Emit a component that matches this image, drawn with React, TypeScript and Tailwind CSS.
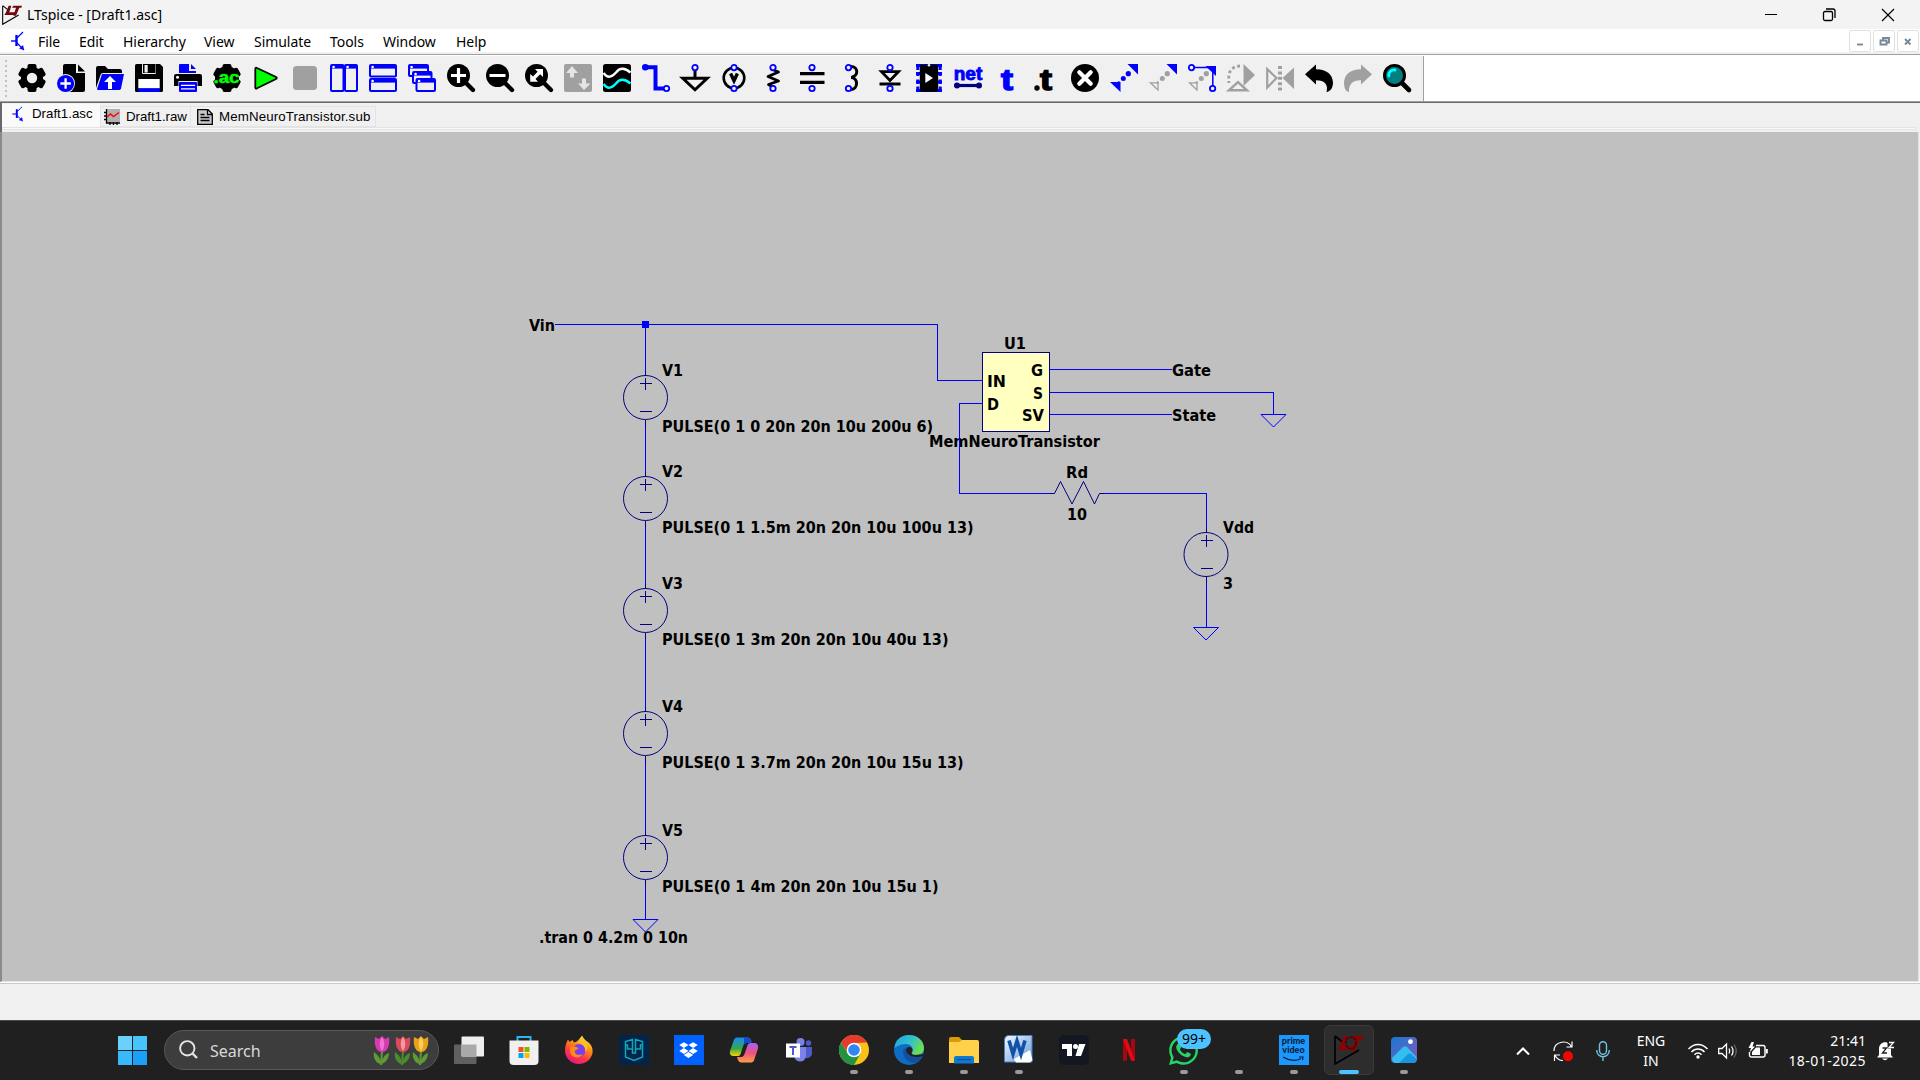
import React from "react";
import type { ReactNode } from "react";
import { FaDropbox, FaWhatsapp } from "react-icons/fa";

const BLUE = "#0000ff";
const NAVY = "#000080";
const GREY = "#a0a0a0";
const BAR = "#f0f0f0";

/* ---------- toolbar ---------- */

function Pin({ x, y }: { x: number; y: number }) {
  return <circle cx={x} cy={y} r="2.7" fill={BAR} stroke={BLUE} strokeWidth="1.8" />;
}

function Lens() {
  return (
    <>
      <circle cx="11.5" cy="11.5" r="11.5" fill="#000" />
      <path d="M18 18 L26 26" stroke="#000" strokeWidth="4.4" strokeLinecap="round" />
    </>
  );
}

function Win({ x, y, w, h, bg = BAR }: { x: number; y: number; w: number; h: number; bg?: string }) {
  return (
    <>
      <rect x={x + 1} y={y + 1} width={w - 2} height={h - 2} rx="1" fill={bg} stroke={BLUE} strokeWidth="2" />
      <rect x={x + 1} y={y + 1} width={w - 2} height="3.6" fill={BLUE} />
      <circle cx={x + 3.6} cy={y + 3} r="1.3" fill="#fff" />
    </>
  );
}

function Dots({ color }: { color: string }) {
  return (
    <g fill={color}>
      <circle cx="13.3" cy="14.5" r="2.5" />
      <circle cx="18.3" cy="9.7" r="2.6" />
      <circle cx="8.8" cy="18.5" r="1.2" />
    </g>
  );
}

const toolIcons: ReactNode[] = [
  <g>
    <rect x="9.5" y="0" width="9" height="28" rx="2" />
    <rect x="9.5" y="0" width="9" height="28" rx="2" transform="rotate(60 14 14)" />
    <rect x="9.5" y="0" width="9" height="28" rx="2" transform="rotate(120 14 14)" />
    <circle cx="14" cy="14" r="11" />
    <circle cx="14" cy="14" r="5.2" fill={BAR} />
  </g>,
  <g>
    <path d="M8 0 H19 V9 H28 V26 Q28 28 26 28 H6 V2 Q6 0 8 0 Z" />
    <path d="M21 0.5 L28 7.5 H21 Z" />
    <circle cx="8.6" cy="19.5" r="9.4" fill={BAR} />
    <circle cx="8.6" cy="19.5" r="8.6" fill={BLUE} />
    <path d="M8.6 14.3 V24.7 M3.4 19.5 H13.8" stroke="#fff" strokeWidth="2.3" />
  </g>,
  <g>
    <path d="M0 24 V4 Q0 2 2 2 H9 L12 5 H24 Q26 5 26 7 V9 H7 Q5 9 4.5 11 Z" />
    <path d="M6 10 H28 L25 24.5 Q24.5 26 23 26 H2 Q0.8 26 1.2 24.5 Z" fill={BLUE} />
    <path d="M14 12 L20 18 H16 V25 H12 V18 H8 Z" fill="#fff" />
  </g>,
  <g>
    <path d="M1.5 0 H25 L28 3 V26.5 Q28 28 26.5 28 H1.5 Q0 28 0 26.5 V1.5 Q0 0 1.5 0 Z" />
    <rect x="7" y="0" width="14" height="10" rx="1" fill={BAR} />
    <rect x="8" y="0" width="12.5" height="9" />
    <rect x="9.5" y="1" width="3.2" height="7.5" fill={BAR} />
    <rect x="3.3" y="15" width="21.4" height="9.5" fill="#fff" />
    <rect x="3.3" y="24.3" width="21.4" height="3.7" fill={BLUE} />
  </g>,
  <g>
    <path d="M5 9 V1 Q5 0 6 0 H15 V7 H22 V9 Z M17 0 L22 5 H17 Z" fill={BLUE} />
    <path d="M2 10 H26 Q28 10 28 12 V22 H23.5 V17 H4.5 V22 H0 V12 Q0 10 2 10 Z" />
    <circle cx="3.5" cy="13.3" r="1.5" fill="#fff" />
    <rect x="5" y="18" width="18" height="10" rx="1" fill={BLUE} />
    <path d="M7 21.3 H21 M7 24.8 H21" stroke="#fff" strokeWidth="1.3" />
  </g>,
  <g>
    <rect x="9.5" y="0" width="9" height="28" rx="2" />
    <rect x="9.5" y="0" width="9" height="28" rx="2" transform="rotate(60 14 14)" />
    <rect x="9.5" y="0" width="9" height="28" rx="2" transform="rotate(120 14 14)" />
    <circle cx="14" cy="14" r="12" />
    <text x="0.5" y="19" textLength="26" lengthAdjust="spacingAndGlyphs" fill="#00ff00" stroke="#00ff00" strokeWidth="0.5" fontFamily="Liberation Sans" fontWeight="700" fontSize="16">.ac</text>
  </g>,
  <path d="M3.3 5 Q3.3 3 5 4 L24 13 Q25.5 14 24 15 L5 24.3 Q3.3 25 3.3 23.3 Z" fill="#00ff00" stroke="#000" strokeWidth="1.8" />,
  <rect x="2" y="2" width="24" height="24" rx="3.5" fill={GREY} />,
  <g>
    <Win x={0} y={0} w={14.5} h={28} />
    <Win x={14} y={0} w={14} h={28} />
  </g>,
  <g>
    <Win x={0} y={0} w={28} h={13.5} />
    <Win x={0} y={14} w={28} h={14} />
  </g>,
  <g>
    <Win x={0} y={0} w={21} h={13} />
    <Win x={4} y={7} w={20.5} h={13} />
    <Win x={7.5} y={14} w={20.5} h={14} />
  </g>,
  <g>
    <Lens />
    <path d="M11.5 4 V19 M4 11.5 H19" stroke="#fff" strokeWidth="3.2" />
  </g>,
  <g>
    <Lens />
    <path d="M3.5 11.5 H19.5" stroke="#fff" strokeWidth="3" />
  </g>,
  <g>
    <Lens />
    <path d="M10 5 H18 V13 L15.2 10.2 L10.5 15 L13 17.8 H5.2 V10 L8 12.6 L12.6 7.8 Z" fill="#fff" />
  </g>,
  <g>
    <rect width="28" height="28" rx="2" fill={GREY} />
    <path d="M8 2 L14 9 H10 V13.5 H6 V9 H2 Z M20 26 L26.5 19.5 H22 V14.5 H18 V19.5 H14 Z" fill="#e4e4e4" />
  </g>,
  <g>
    <rect width="28" height="28" rx="2.5" />
    <path d="M0.5 9 C5 15 9 13 13 8.5 C17 3 22 4 27.5 8.5" fill="none" stroke="#fff" strokeWidth="2.4" />
    <path d="M0.5 20 C5 26 9 24 13 19.5 C17 14 22 15 27.5 19.5" fill="none" stroke="#00ffff" strokeWidth="2.4" />
  </g>,
  <g>
    <path d="M3 3.2 H13.5 V24.5 H22" fill="none" stroke={BLUE} strokeWidth="4" />
    <circle cx="3.3" cy="3.2" r="3.3" fill={BLUE} />
    <Pin x={24.5} y={24.5} />
  </g>,
  <g>
    <path d="M14 6 V14 M1.8 14.3 H26.2 L14 25.8 Z" fill="none" stroke="#000" strokeWidth="3" />
    <Pin x={14} y={3.6} />
  </g>,
  <g>
    <circle cx="14" cy="14" r="10.3" fill="none" stroke="#000" strokeWidth="2.6" />
    <path d="M10.6 9.6 L14 16.8 L17.4 9.6" fill="none" stroke="#000" strokeWidth="3.4" />
    <Pin x={14} y={3.6} />
    <Pin x={14} y={24.5} />
  </g>,
  <g>
    <path d="M15 6.2 L19.5 8 L9 12.5 L19.5 17 L9.5 20.5 L13 22.5" fill="none" stroke="#000" strokeWidth="2.8" strokeLinejoin="round" />
    <Pin x={14} y={3.6} />
    <Pin x={14} y={24.5} />
  </g>,
  <g>
    <path d="M2 9.6 H26.5 M2 18.3 H26.5" stroke="#000" strokeWidth="3.2" />
    <Pin x={14} y={3.6} />
    <Pin x={14} y={24.5} />
  </g>,
  <g>
    <path d="M14 2.500 C21.500 2.500 21.500 12 15 13 M14 13.500 C21.500 13.500 21.500 25.500 13.500 25.500" fill="none" stroke="#000" strokeWidth="3" />
    <Pin x={11.5} y={3.6} />
    <Pin x={11.5} y={24.5} />
  </g>,
  <g>
    <path d="M5.5 7.6 H22.5 L14 16.5 Z M3.5 20 H24.5" fill="none" stroke="#000" strokeWidth="2.8" />
    <Pin x={14} y={3.6} />
    <Pin x={14} y={24.5} />
  </g>,
  <g>
    <path d="M1 1.5 H27 M1 9.5 H27 M1 18 H27 M1 26.5 H27 M2.8 0 V6 M2.8 8 V12 M2.8 15.5 V20 M2.8 22.5 V28 M25.2 0 V6 M25.2 8 V12 M25.2 15.5 V20 M25.2 22.5 V28" stroke={BLUE} strokeWidth="3" />
    <rect x="4.8" y="0.7" width="18.4" height="27" rx="2" />
    <path d="M10.3 9 L18 14 L10.3 19 Z" fill="#fff" />
    <circle cx="14" cy="1.2" r="1.3" fill={BAR} />
  </g>,
  <g>
    <text x="-0.3" y="16" textLength="28.5" lengthAdjust="spacingAndGlyphs" fill={BLUE} stroke={BLUE} strokeWidth="0.9" fontFamily="Liberation Sans" fontWeight="700" fontSize="19">net</text>
    <path d="M3 21.5 H25" stroke={NAVY} strokeWidth="3.2" />
    <circle cx="3" cy="21.5" r="3" fill={NAVY} />
    <circle cx="25" cy="21.5" r="3" fill={NAVY} />
  </g>,
  <text x="8" y="25.5" textLength="12" lengthAdjust="spacingAndGlyphs" fill={BLUE} stroke={BLUE} strokeWidth="1.4" fontFamily="Liberation Sans" fontWeight="700" fontSize="30">t</text>,
  <g stroke="#000" strokeWidth="1.4">
    <text x="8" y="25.5" textLength="12" lengthAdjust="spacingAndGlyphs" fontFamily="Liberation Sans" fontWeight="700" fontSize="30">t</text>
    <circle cx="5" cy="24" r="2" />
  </g>,
  <g>
    <circle cx="14" cy="14" r="14" />
    <path d="M8.3 8.3 L19.7 19.7 M19.7 8.3 L8.3 19.7" stroke="#fff" strokeWidth="4.2" strokeLinecap="round" />
  </g>,
  <g fill={BLUE}>
    <path d="M17.5 0 H28 V10.5 Z M0 18 H10.5 V28 Z" />
    <Dots color={BLUE} />
  </g>,
  <g>
    <path d="M17.5 0 H28 V10.5 Z" fill={BLUE} />
    <path d="M1.5 18.8 H9 V26 Z" fill="none" stroke={GREY} strokeWidth="1.3" />
    <Dots color={GREY} />
  </g>,
  <g>
    <path d="M17.5 2 H28 V12 Z" fill={BLUE} />
    <path d="M1.5 18.8 H9 V26 Z" fill="none" stroke={GREY} strokeWidth="1.3" />
    <Dots color={GREY} />
    <path d="M4 3.5 H27 M24.8 5 V22" stroke={BLUE} strokeWidth="1.5" />
    <Pin x={3.5} y={3.6} />
    <Pin x={24.6} y={24.5} />
  </g>,
  <g fill={GREY}>
    <path d="M16.5 0 L28 11 L16.5 22 Z" />
    <path d="M1.8 26.3 L11 18 L20 26.3 Z" fill="none" stroke={GREY} strokeWidth="2.4" />
    <path d="M13 2 C6 2 1.8 7 1.8 13 V19" fill="none" stroke={GREY} strokeWidth="2.8" strokeDasharray="2.8 2.6" />
  </g>,
  <g fill={GREY}>
    <path d="M28 3.5 V25 L16.5 14 Z" />
    <path d="M1.2 5 V23.5 L10.5 14 Z" fill="none" stroke={GREY} strokeWidth="2.2" />
    <path d="M14 2 V27" stroke={GREY} strokeWidth="4" strokeDasharray="3 2.4" />
  </g>,
  <path d="M0 10.3 L11 0.5 V5.3 C22 5.5 27.8 10.5 28 19 C27.8 24 25.5 27.5 21.5 28 C23.5 21 20 16.3 11 16.3 V20.5 Z" />,
  <path d="M28 10.3 L17 0.5 V5.3 C6 5.5 0.2 10.5 0 19 C0.2 24 1.5 27.5 5 28 C4.5 21 8 16.3 17 16.3 V20.5 Z" fill={GREY} />,
  <g>
    <path d="M19 19 L26 26" stroke="#000" strokeWidth="4.6" strokeLinecap="round" />
    <circle cx="11.5" cy="11.5" r="10" fill="#008080" stroke="#000" strokeWidth="3" />
    <path d="M5.8 12 C5.5 8 8.5 5.5 12 6" fill="none" stroke="#00ffff" strokeWidth="2.8" strokeLinecap="round" />
  </g>,
];

function Logo({ dark, className }: { dark?: boolean; className: string }) {
  return (
    <svg viewBox="0 0 30 30" className={className}>
      <path d="M1 1 V29 L25 15 M1 1 L10 8" fill="none" stroke="#000" strokeWidth="1.6" />
      <path d="M10 1 H14 L11 11 H19 L18 15 H3.500 L6 11 Z M17 1 H30 L29 4 H26 L21 16 H17 L21 4 H15 Z" fill={dark ? "#8b0000" : "#700810"} />
      {dark && <ellipse cx="17" cy="8" rx="5" ry="6" fill="none" stroke="#111" strokeWidth="1.2" strokeDasharray="3 1" />}
    </svg>
  );
}

function Transistor({ className }: { className: string }) {
  return (
    <svg viewBox="0 0 14 20" className={className} fill="none" stroke={BLUE}>
      <path d="M0 10 H5" strokeWidth="1.4" />
      <path d="M5.500 4 V15" strokeWidth="2.4" />
      <path d="M6 7 L12 1 M6 12 L13 19" strokeWidth="1.2" />
      <path d="M8.500 17.500 L12.500 18.500 L12 14.500 Z" fill={BLUE} strokeWidth="0.5" />
    </svg>
  );
}

const menus: [string, string][] = [
  ["File", "w-[41px]"],
  ["Edit", "w-[44px]"],
  ["Hierarchy", "w-[81px]"],
  ["View", "w-[50px]"],
  ["Simulate", "w-[76px]"],
  ["Tools", "w-[53px]"],
  ["Window", "w-[73px]"],
  ["Help", "w-[60px]"],
];

/* ---------- schematic ---------- */

function Label({ x, y, w, children }: { x: number; y: number; w: number; children: string }) {
  return (
    <text x={x} y={y} textLength={w} lengthAdjust="spacingAndGlyphs">
      {children}
    </text>
  );
}

function Source({ x, y }: { x: number; y: number }) {
  return (
    <g stroke={NAVY} fill="none">
      <circle cx={x} cy={y} r="22" />
      <path d={`M${x - 5.5} ${y - 14} h12 M${x} ${y - 20} v12 M${x - 5.5} ${y + 14} h12 M${x} ${y - 27} v5 M${x} ${y + 22} v6`} shapeRendering="crispEdges" />
    </g>
  );
}

function Ground({ x, y }: { x: number; y: number }) {
  return <path d={`M${x - 12.5} ${y} h25 l-12.500 12.500 Z`} fill="none" stroke={BLUE} />;
}

const sources = [
  { n: "V1", y: 397.5, t: "PULSE(0 1 0 20n 20n 10u 200u 6)", w: 271 },
  { n: "V2", y: 498.5, t: "PULSE(0 1 1.5m 20n 20n 10u 100u 13)", w: 311.5 },
  { n: "V3", y: 610.5, t: "PULSE(0 1 3m 20n 20n 10u 40u 13)", w: 286.5 },
  { n: "V4", y: 733.5, t: "PULSE(0 1 3.7m 20n 20n 10u 15u 13)", w: 301.5 },
  { n: "V5", y: 857.5, t: "PULSE(0 1 4m 20n 20n 10u 15u 1)", w: 276.5 },
];

function Schematic() {
  return (
    <svg viewBox="2 132 1916 849" className="block h-[849px] w-[1916px]">
      <rect x="982.5" y="352.5" width="67" height="79" fill="#ffffc0" stroke={NAVY} />
      <g fontFamily="'DejaVu Sans Condensed', 'DejaVu Sans', sans-serif" fontStretch="condensed" fontWeight="700" fontSize="16" fill="#000">
        <Label x={529} y={331} w={26}>Vin</Label>
        {sources.map((s) => (
          <g key={s.n}>
            <Label x={662} y={s.y - 21.5} w={21}>{s.n}</Label>
            <Label x={662} y={s.y + 34.5} w={s.w}>{s.t}</Label>
          </g>
        ))}
        <Label x={539} y={943} w={149}>.tran 0 4.2m 0 10n</Label>
        <Label x={1004} y={349} w={22}>U1</Label>
        <Label x={987} y={387} w={19}>IN</Label>
        <Label x={987} y={410} w={12}>D</Label>
        <Label x={1031} y={376} w={12}>G</Label>
        <Label x={1033} y={399} w={10}>S</Label>
        <Label x={1022} y={421} w={22}>SV</Label>
        <Label x={1172} y={376} w={39}>Gate</Label>
        <Label x={1172} y={421} w={44}>State</Label>
        <Label x={929} y={447} w={171}>MemNeuroTransistor</Label>
        <Label x={1066} y={478} w={22}>Rd</Label>
        <Label x={1067} y={520} w={20}>10</Label>
        <Label x={1223} y={533} w={31}>Vdd</Label>
        <Label x={1223} y={589} w={10}>3</Label>
      </g>
      <g fill="none" stroke={BLUE} shapeRendering="crispEdges">
        <path d="M555 324.500 H937.500 V380.500 H982 M1050 369.500 H1172 M1050 392.500 H1273.500 V414.500 M1050 414.500 H1172 M982 403.500 H959.500 V493.500 H1051 M1104 493.500 H1206.500 V528 M1206.500 582 V627.500" />
        <path d="M645.500 324.500 V371 M645.500 425 V472 M645.500 526 V584 M645.500 638 V707 M645.500 761 V831 M645.500 885 V919.500" />
      </g>
      <rect x="642" y="321" width="7" height="7" fill={BLUE} />
      {sources.map((s) => (
        <Source key={s.n} x={645.5} y={s.y} />
      ))}
      <Source x={1206} y={554.5} />
      <path d="M1050 493.500 H1054.500 L1060.500 481.500 L1072 504 L1083.500 481.500 L1094.500 504 L1099.500 493.500 H1105" fill="none" stroke={NAVY} />
      <Ground x={645.5} y={919.5} />
      <Ground x={1273.5} y={414.5} />
      <Ground x={1206} y={627.5} />
    </svg>
  );
}

/* ---------- taskbar ---------- */

function Tulip({ x, c, l, leaf }: { x: number; c: string; l: string; leaf: string }) {
  return (
    <g transform={`translate(${x} 0)`}>
      <path d="M10 16 L9 30" stroke={leaf} strokeWidth="2" />
      <path d="M9 29 C3 28 1 22 2 17 C6 20 9 24 9 29 Z M9 29 C14 28 17 23 17 18 C12 20 10 24 9 29 Z" fill={leaf} />
      <path d="M3 2 L7 4 L10 1 L13 4 L17 2 C18 10 16 17 10 17 C4 17 2 10 3 2 Z" fill={c} />
      <path d="M10 2 C13 6 13 12 10 16 C7 12 7 6 10 2 Z" fill={l} />
    </g>
  );
}

interface App {
  icon: ReactNode;
  running?: boolean;
  active?: boolean;
}

const apps: App[] = [
  {
    icon: (
      <svg viewBox="0 0 30 30" className="size-[30px]">
        <rect x="0" y="9.500" width="22.500" height="19.500" rx="1" fill="#606060" />
        <rect x="7.500" y="1.500" width="22.500" height="20" rx="1" fill="#eeeeee" />
        <rect x="7.500" y="9.500" width="15" height="12" fill="#a9a9a9" />
      </svg>
    ),
  },
  {
    icon: (
      <svg viewBox="0 0 30 30" className="size-[30px]">
        <path d="M8.500 7 V2 H21.500 V7" fill="none" stroke="#29b6f6" strokeWidth="2" />
        <path d="M.5 5.500 H29.500 V26 Q29.500 30 25.500 30 H4.500 Q.5 30 .5 26 Z" fill="#f0f0f0" />
        <rect x="9.500" y="12" width="5" height="5" fill="#f25022" />
        <rect x="15.500" y="12" width="5" height="5" fill="#7fba00" />
        <rect x="9.500" y="18" width="5" height="5" fill="#00a4ef" />
        <rect x="15.500" y="18" width="5" height="5" fill="#ffb900" />
      </svg>
    ),
  },
  {
    icon: (
      <svg viewBox="0 0 30 30" className="size-[30px]">
        <defs>
          <linearGradient id="fx" x1="0.8" y1="0" x2="0.3" y2="1">
            <stop offset="0" stopColor="#fff44f" />
            <stop offset="0.35" stopColor="#ff980e" />
            <stop offset="0.7" stopColor="#ff3647" />
            <stop offset="1" stopColor="#e31587" />
          </linearGradient>
        </defs>
        <path d="M18 0.500 C20 4 21 5 24 7 C28 10 29 14 28.500 18 C27 25 21 29 15 29 C7 29 1 23 1 15.500 C1 11 2.500 7 4 4.500 L5.500 7 L8.500 5 L10 7.500 C13 7 15.500 4 18 0.500 Z" fill="url(#fx)" />
        <circle cx="15" cy="15.500" r="6.500" fill="#7b3ff0" />
        <path d="M6 12 C10 10 12 12 15 13 L10.500 16 C11 20 15 21 19 19 C16 24 7 24 6 16 Z" fill="#ff8a16" />
        <path d="M13 8 C19 8 22 12 21 17 C25 13 24 8 18 5 Z" fill="#ffbd2e" />
      </svg>
    ),
  },
  {
    icon: (
      <svg viewBox="0 0 30 30" className="size-[30px]" fill="none" stroke="#12a5b8" strokeWidth="1.500">
        <rect width="30" height="30" fill="#00244a" stroke="none" />
        <path d="M6.500 15 V6.500 L13.500 4.500 V14 H8.500 V10 H6.500 M23.500 15 V6.500 L16.500 4.500 V14 H21.500 V10 H23.500 M6.500 15 V22 L15 25.500 L23.500 22 V15 M13.500 14 V18 H16.500 V14" />
      </svg>
    ),
  },
  {
    icon: (
      <div className="flex size-[30px] items-center justify-center bg-[#0061ff]">
        <FaDropbox className="h-[18px] w-[19px] text-white" />
      </div>
    ),
  },
  {
    icon: (
      <svg viewBox="0 0 30 30" className="size-[30px]">
        <defs>
          <linearGradient id="cp1" x1="0" y1="0" x2="0" y2="1">
            <stop offset="0" stopColor="#178cf0" />
            <stop offset="0.6" stopColor="#35a84c" />
            <stop offset="1" stopColor="#ffd400" />
          </linearGradient>
          <linearGradient id="cp2" x1="0" y1="0" x2="0" y2="1">
            <stop offset="0" stopColor="#a763f5" />
            <stop offset="0.5" stopColor="#ee4f82" />
            <stop offset="1" stopColor="#ff9f43" />
          </linearGradient>
        </defs>
        <path d="M8 2.500 H19 Q22 3 22.500 7 H18 Q15.500 7 14.500 10 L11.500 19 Q11 21.500 8 21 H4 Q0 20.500 1 16 L4.500 6 Q5.500 2.500 8 2.500 Z" fill="url(#cp1)" />
        <path d="M15 2.500 H19 Q21.500 3 22.500 8 H18 Q16 8 15 10 Z" fill="#1748d0" />
        <path d="M22 27.500 H12 Q9 27 8 22 H12 Q14.500 22 15.500 19 L18.500 10.500 Q19 8 22 8 H26 Q30 9 29 13.500 L25.500 24 Q24.500 27.500 22 27.500 Z" fill="url(#cp2)" />
      </svg>
    ),
  },
  {
    icon: (
      <svg viewBox="0 0 30 30" className="size-[30px]">
        <circle cx="16.500" cy="7" r="4" fill="#7b83eb" />
        <circle cx="24.500" cy="8" r="2.700" fill="#5059c9" />
        <path d="M20 12 H28 V19 Q27 24 20 23 Z" fill="#5059c9" />
        <path d="M10 12 H22 V21 Q21 26.500 16 26.500 Q11 26 10 21 Z" fill="#7b83eb" />
        <rect x="2" y="8.500" width="14" height="14" fill="#fff" />
        <path d="M5.500 12 H12.500 M9 12 V20" stroke="#5059c9" strokeWidth="2" />
      </svg>
    ),
  },
  {
    running: true,
    icon: (
      <svg viewBox="0 0 30 30" className="size-[30px]">
        <circle cx="15" cy="15" r="15" fill="#fbc116" />
        <path d="M2 7.500 A15 15 0 0 1 28 7.500 L15 8 L9 18 Z" fill="#e33b2e" />
        <path d="M2 7.500 A15 15 0 0 0 15 30 L21.500 18.500 L9 18.500 Z" fill="#229342" />
        <circle cx="15" cy="15" r="7.300" fill="#fff" />
        <circle cx="15" cy="15" r="5.800" fill="#3086f6" />
      </svg>
    ),
  },
  {
    running: true,
    icon: (
      <svg viewBox="0 0 30 30" className="size-[30px]">
        <defs>
          <linearGradient id="eg" x1="0" y1="0" x2="1" y2="0.400">
            <stop offset="0" stopColor="#1ca6e8" />
            <stop offset="0.6" stopColor="#35c1c9" />
            <stop offset="1" stopColor="#6bdf52" />
          </linearGradient>
        </defs>
        <circle cx="15" cy="15" r="15" fill="#0f6cc4" />
        <path d="M0.500 13 C1 5 7 0 15 0 C24 0 30 6 30 13 C30 18 26 20 22 20 C18 20 17 18.500 18.500 17 C20 13 17 9 12 9 C6 9 2 12 0.500 13 Z" fill="url(#eg)" />
        <path d="M10 13 C7 20 12 27 20 28 C25 27 28 23 28.500 20 C23 23.500 14 22 12 15 Z" fill="#134f9c" />
        <path d="M12 14.500 C12 11.500 17 11 18.200 14 C19 16 17.500 17 17.500 18.500 C18 20 20 20.500 30 19 L29 21 C20 24 12 20 12 14.500 Z" fill="#202020" />
      </svg>
    ),
  },
  {
    running: true,
    icon: (
      <svg viewBox="0 0 30 30" className="size-[30px]">
        <path d="M0 4 Q0 2 2 2 H10 L13 5 H22 V10 H0 Z" fill="#dd9a07" />
        <path d="M0 7 H10 L13 5 H28 Q30 5 30 7 V28 H0 Z" fill="#ffd04a" />
        <path d="M5 28.500 V23 Q5 21 7 21 H23 Q25 21 25 23 V28.500 Z" fill="#0f7ad0" />
        <path d="M8 24.500 H22" stroke="#0a539c" strokeWidth="1.200" />
      </svg>
    ),
  },
  {
    running: true,
    icon: (
      <svg viewBox="0 0 30 30" className="size-[30px]">
        <defs>
          <linearGradient id="wd" x1="0" y1="0" x2="1" y2="1">
            <stop offset="0" stopColor="#f4f9ff" />
            <stop offset="1" stopColor="#5f9bdb" />
          </linearGradient>
        </defs>
        <path d="M4 0.500 H28 V27 H0.500 V5 Q0.500 1 4 0.500 Z" fill="url(#wd)" stroke="#4a7fc0" />
        <path d="M10 24 L26 15 L28.500 25 L26 27.500 H12 Z" fill="#fff" />
        <path d="M5 5.500 L9 19 L13 6 L17 19 L21 5.500" fill="none" stroke="#1350a8" strokeWidth="3.600" />
      </svg>
    ),
  },
  {
    icon: (
      <svg viewBox="0 0 30 30" className="size-[30px]">
        <rect width="30" height="30" rx="5" fill="#131722" />
        <path d="M3 9 H13 V21 H8 V14 H3 Z M20 9 H26.500 L22 21 H16.500 Z" fill="#fff" />
        <circle cx="16.500" cy="11.500" r="2.500" fill="#fff" />
      </svg>
    ),
  },
  {
    icon: (
      <svg viewBox="0 0 30 30" className="size-[30px]">
        <path d="M9 4 H13 V25.500 L9 26 Z M17 4 H21 V26 L17 25.500 Z" fill="#a60710" />
        <path d="M9 4 H13 L21 26 L17 25.500 Z" fill="#e50914" />
      </svg>
    ),
  },
  {
    running: true,
    icon: (
      <div className="relative">
        <FaWhatsapp className="size-[33px] text-[#25d366]" />
        <span className="absolute -top-[5px] left-[10px] flex h-5 w-[34px] items-center justify-center rounded-full bg-[#4cc2ff] text-[14px] text-black">
          99+
        </span>
      </div>
    ),
  },
  { running: true, icon: null },
  {
    running: true,
    icon: (
      <div className="flex size-[30px] flex-col items-center bg-[#1a98ff] pt-[2px] font-['Lato',sans-serif] text-[9px] leading-[8.500px] font-black text-[#0a1e33]">
        <span>prime</span>
        <span>video</span>
        <svg viewBox="0 0 22 6" className="mt-[2px] h-[6px] w-[22px]">
          <path d="M0 1 Q10 7 18 2.500 M16 1 H20 L19.500 4" fill="none" stroke="#0a1e33" strokeWidth="1.200" />
        </svg>
      </div>
    ),
  },
  { running: true, active: true, icon: <Logo dark className="size-[30px]" /> },
  {
    running: true,
    icon: (
      <svg viewBox="0 0 26 26" className="size-[26px]">
        <defs>
          <linearGradient id="ph" x1="0" y1="0" x2="1" y2="1">
            <stop offset="0" stopColor="#1579d3" />
            <stop offset="1" stopColor="#8658b8" />
          </linearGradient>
        </defs>
        <rect width="26" height="26" rx="4" fill="url(#ph)" />
        <path d="M1 21 L12 10 Q14 8.500 16 10 L25.500 20 Q26 26 21 26 H5 Q1 26 1 21 Z" fill="#35bdf0" />
        <path d="M8 26 L17 17 Q19 16 20.500 17.500 L25.500 22 Q25 26 21 26 Z" fill="#1795dd" />
        <circle cx="19.500" cy="4.700" r="2.400" fill="#fff" />
      </svg>
    ),
  },
];

function Taskbar() {
  return (
    <div className="flex h-[60px] border-t border-[#4a4a4a] bg-[#202020] text-[15px] text-white">
      <div className="ml-[118px] flex w-[46px] items-center">
        <div className="grid size-[29px] grid-cols-2 gap-px">
          <div className="bg-[#6bd0fb]" />
          <div className="bg-[#45c5fb]" />
          <div className="bg-[#38b9fa]" />
          <div className="bg-[#1aa0f8]" />
        </div>
      </div>
      <div className="mt-[9px] flex h-10 w-[275px] items-center rounded-full border border-[#585858] bg-[#3d3d3d] pr-[5px] pl-[14px]">
        <svg viewBox="0 0 20 20" className="size-5" fill="none" stroke="#e4e4e4">
          <circle cx="8.300" cy="8.300" r="7.200" strokeWidth="1.900" />
          <path d="M13.500 13.500 L18 18" strokeWidth="2.400" />
        </svg>
        <span className="mt-px ml-[11px] text-[16px] text-[#d8d8d8]">Search</span>
        <svg viewBox="0 0 60 32" className="mt-px ml-auto h-8 w-[60px]">
          <Tulip x={-1} c="#d63bb0" l="#f56fd8" leaf="#5d9c34" />
          <Tulip x={20} c="#d84a5c" l="#f79aa0" leaf="#4b8c2c" />
          <Tulip x={38} c="#e8a31c" l="#fccf57" leaf="#5d9c34" />
        </svg>
      </div>
      <div className="ml-[2px] flex">
        {apps.map((a, i) => (
          <div key={i} className="flex w-[55px] justify-center">
            <div
              className={
                a.active
                  ? "relative mt-1 flex h-[50px] w-[50px] items-center justify-center rounded-md border border-[#3a3a3a] bg-[#2d2d2d]"
                  : "relative mt-1 flex h-[50px] w-[50px] items-center justify-center"
              }
            >
              {a.icon}
              {a.running && (
                <span
                  className={
                    a.active
                      ? "absolute bottom-0 h-1 w-5 rounded-full bg-[#4cc2ff]"
                      : "absolute bottom-[1px] h-1 w-2 rounded-full bg-[#9a9a9a]"
                  }
                />
              )}
            </div>
          </div>
        ))}
      </div>
      <div className="ml-auto flex items-center pr-[25px]">
        <svg viewBox="0 0 14 8" className="h-2 w-[14px]" fill="none" stroke="#fff" strokeWidth="2">
          <path d="M1 7.500 L7 1.500 L13 7.500" />
        </svg>
        <svg viewBox="0 0 20 20" className="ml-[23px] size-5" fill="none" stroke="#fff" strokeWidth="1.200">
          <path d="M1 10 C1 0 15 -2 18.500 6 M19 0.500 V6 H13.500 M1.500 20 V14 H7 M2 14.500 C4 18 7 19.500 10 19.500" />
          <circle cx="15" cy="15.200" r="5" fill="#ff0000" stroke="none" />
        </svg>
        <svg viewBox="0 0 14 20" className="ml-[23px] h-5 w-[14px]" fill="none" stroke="#6ec3e0" strokeWidth="1.400">
          <rect x="3.500" y="0.700" width="7" height="12.500" rx="3.500" />
          <path d="M0.700 9 C0.700 18 13.300 18 13.300 9 M7 15.500 V20" />
        </svg>
        <div className="ml-[22px] flex w-[38px] flex-col items-center text-[14px] leading-5">
          <span>ENG</span>
          <span>IN</span>
        </div>
        <svg viewBox="0 0 20 16" className="ml-[18px] h-4 w-5" fill="none" stroke="#fff" strokeWidth="1.500">
          <path d="M0.500 6 C6 0 14 0 19.500 6 M3.500 9 C7 5 13 5 16.500 9 M6.500 11.700 C8.500 9.500 11.500 9.500 13.500 11.700" />
          <circle cx="10" cy="14" r="1.700" fill="#fff" stroke="none" />
        </svg>
        <svg viewBox="0 0 20 18" className="ml-[10px] h-[18px] w-5" fill="none" stroke="#fff" strokeWidth="1.300">
          <path d="M0.700 6.500 H4 L8.500 2 V16 L4 11.500 H0.700 Z M11 6.500 Q12.500 9 11 11.500 M13.500 4.500 Q16.500 9 13.500 13.500" />
          <path d="M16 2.500 Q20.500 9 16 15.500" stroke="#666" />
        </svg>
        <svg viewBox="0 0 20 18" className="ml-[10px] h-[18px] w-5" fill="none" stroke="#fff" strokeWidth="1.400">
          <path d="M8 3.500 H15 Q17 3.500 17 5.500 V13 Q17 15 15 15 H3.500 Q1.500 15 1.500 13 V10" />
          <path d="M18.800 7 V11.500" strokeWidth="2" />
          <path d="M8 5.500 H12 V13 H4 V10 Z M3.500 0 L0.500 6 H3 L1.500 10.500 L7 4.500 H4.500 L6 0 Z" fill="#fff" stroke="none" />
        </svg>
        <div className="ml-4 flex w-[82px] flex-col items-end text-[14px] leading-5 whitespace-nowrap">
          <span>21:41</span>
          <span className="tracking-[0.45px]">18-01-2025</span>
        </div>
        <svg viewBox="0 0 18 20" className="ml-[11px] h-5 w-[18px]">
          <path d="M2 14 V8 C2 -1 14 -1 14 8 V14 L16 16.500 H0 Z M5 17.500 H11 Q8 21 5 17.500 Z" fill="#fff" />
          <path d="M5.500 7 H9.500 L5.500 12 H10" stroke="#202020" strokeWidth="1.300" fill="none" />
          <path d="M10.500 0 H18 V7.500 H10.500 Z" fill="#202020" />
          <path d="M12 1.500 H16.500 L12 6.500 H17" stroke="#fff" strokeWidth="1.300" fill="none" />
        </svg>
      </div>
    </div>
  );
}

export default function App() {
  return (
    <div className="flex h-[1080px] w-[1920px] flex-col overflow-hidden bg-[#f0f0f0] font-['Noto_Sans','Open_Sans',sans-serif] text-black">
      <div className="flex h-[29px] items-center bg-[#f3f3f3] pl-[2px]">
        <Logo className="size-5" />
        <span className="ml-[5px] text-[14px]">LTspice - [Draft1.asc]</span>
        <svg viewBox="0 0 132 14" className="mr-[25px] ml-auto h-[14px] w-[132px]" fill="none" stroke="#000">
          <path d="M2 6.500 H14" shapeRendering="crispEdges" />
          <rect x="60.500" y="3.500" width="9" height="9" rx="1.500" strokeWidth="1.300" />
          <path d="M63 1 H70 Q72 1 72 3 V10" strokeWidth="1.300" />
          <path d="M119 1 L131 13 M131 1 L119 13" strokeWidth="1.200" />
        </svg>
      </div>

      <div className="flex h-[23px] items-center bg-white pl-[11px] text-[14px]">
        <Transistor className="h-5 w-[14px]" />
        <div className="mt-px ml-[13px] flex tracking-[-0.05px]">
          {menus.map(([name, w]) => (
            <span key={name} className={w}>
              {name}
            </span>
          ))}
        </div>
        <div className="mt-px mr-px ml-auto flex gap-[2px]">
          {["M4 12.500 H10", "M6 8.500 V6 H12 V10.500 H10 M3.500 8.500 H9.500 V12.500 H3.500 Z", "M4 7 L9.500 12.500 M9.500 7 L4 12.500"].map((d) => (
            <div key={d} className="flex h-[22px] w-[22px] items-center justify-center rounded-[2px] border border-[#e0e0e0] bg-white">
              <svg viewBox="0 0 14 18" className="h-[18px] w-[14px]" fill="none" stroke="#778899" strokeWidth="1.900">
                <path d={d} />
              </svg>
            </div>
          ))}
        </div>
      </div>
      <div className="h-[2px] bg-[#f0f0f0]" />

      <div className="flex h-[47px] border-t border-[#a0a0a0] bg-white">
        <div className="mt-px flex h-[45px] w-[1424px] items-center border-r border-[#a0a0a0] bg-[#f0f0f0] pb-px">
          <div className="ml-[5px] flex w-[13px] flex-col gap-[3px]">
            {Array.from({ length: 8 }, (_, i) => (
              <span key={i} className="h-[2px] w-[2px] bg-[#c0c0c0]" />
            ))}
          </div>
          <div className="flex gap-[11px]">
            {toolIcons.map((icon, i) => (
              <svg key={i} viewBox="0 0 28 28" className="size-7 overflow-visible">
                {icon}
              </svg>
            ))}
          </div>
        </div>
      </div>

      <div className="h-px bg-[#a0a0a0]" />
      <div className="h-[30px] border-t border-l-2 border-[#696969] bg-[#f0f0f0] font-['Liberation_Sans',Arial,sans-serif] text-[13.300px]">
        <div className="flex h-[24px] pt-px">
          <div className="flex w-[98px] items-center bg-[#fafafa] pb-[3px] pl-[10px]">
            <Transistor className="h-4 w-[12px]" />
            <span className="ml-[8px]">Draft1.asc</span>
          </div>
          <div className="mt-[2px] flex w-[91px] items-center border border-[#e3e3e3] pl-[3px]">
            <svg viewBox="0 0 16 16" className="size-4">
              <rect x="2" width="14" height="13" fill="#b0b0b0" />
              <path d="M2.500 0 V14 H16 M0 3.500 H3 M0 7 H3 M0 10.500 H3 M6 13 V16 M9.500 13 V16 M13 13 V16" stroke="#000" fill="none" strokeWidth="1.300" />
              <path d="M3 8 L6.500 5 L9.500 7.500 L15 3.500" fill="none" stroke="#ff0000" strokeWidth="1.400" />
            </svg>
            <span className="ml-[6px] tracking-[-0.05px]">Draft1.raw</span>
          </div>
          <div className="mt-[2px] flex w-[185px] items-center border border-l-0 border-[#e3e3e3] pl-[6px]">
            <svg viewBox="0 0 16 16" className="size-4" fill="#c8c8c8" stroke="#000" strokeWidth="1.300">
              <path d="M0.700 0.700 H11 L15.300 5 V15.300 H0.700 Z M10.500 1 V5.500 H15 M3.500 5.500 H7.500 M3.500 8.500 H12.500 M3.500 11.500 H12.500" />
            </svg>
            <span className="ml-[6px] tracking-[0.12px]">MemNeuroTransistor.sub</span>
          </div>
        </div>
        <div className="mr-1 h-[3px] border border-[#e3e3e3] bg-[#fafafa]" />
      </div>

      <div className="h-[850px] w-[1919px] border-r border-b border-l-2 border-r-[#e3e3e3] border-b-[#e3e3e3] border-l-[#8a8a8a] bg-[#c0c0c0]">
        <Schematic />
      </div>

      <div className="mt-px h-[37px] border-t border-[#c8c8c8] bg-[#f0f0f0] shadow-[0_-1px_0_#ffffff]" />

      <Taskbar />
    </div>
  );
}
